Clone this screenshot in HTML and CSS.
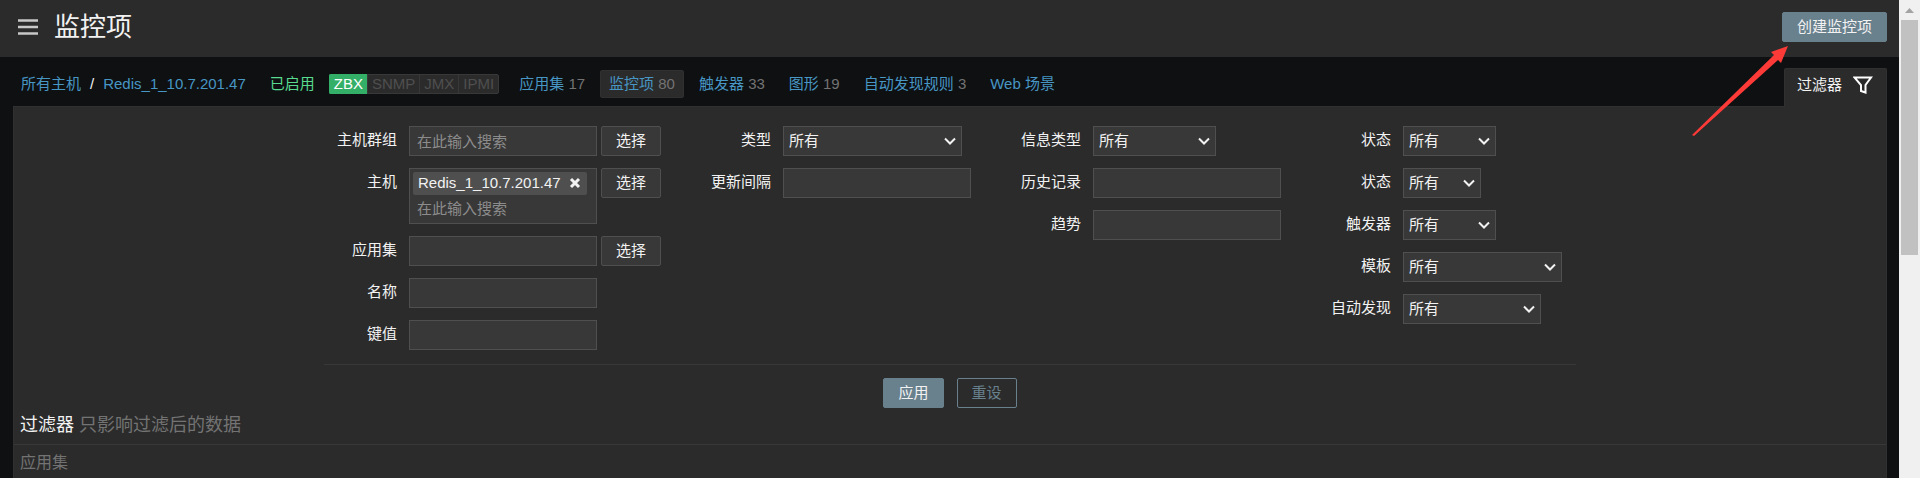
FILE: index.html
```html
<!DOCTYPE html>
<html lang="zh-CN">
  <head>
    <meta charset="UTF-8" />
    <meta name="viewport" content="width=device-width, initial-scale=1.0" />

    <title>监控项</title>

    <link rel="stylesheet" href="styles.css">
  </head>

  <body>
    <main class="page">
      <header class="header">
        <button type="button" class="menu-toggle" aria-label="菜单">
          <svg width="20" height="16" viewBox="0 0 20 16">
            <path d="M0 1.5h20M0 8h20M0 14.5h20" stroke="#c8c8c8" stroke-width="2.6" />
          </svg>
        </button>
        <h1>监控项</h1>
        <button type="button" class="btn primary create">创建监控项</button>
      </header>

      <div class="nav-row">
        <nav class="host-nav">
          <a href="#">所有主机</a>
          <span class="slash">/</span>
          <a href="#">Redis_1_10.7.201.47</a>
          <span class="enabled">已启用</span>
          <div class="badges">
            <span class="on">ZBX</span>
            <span>SNMP</span>
            <span>JMX</span>
            <span>IPMI</span>
          </div>
          <div class="tabs">
            <div class="tab"><a href="#">应用集</a> 17</div>
            <div class="tab selected"><a href="#">监控项</a> 80</div>
            <div class="tab"><a href="#">触发器</a> 33</div>
            <div class="tab"><a href="#">图形</a> 19</div>
            <div class="tab"><a href="#">自动发现规则</a> 3</div>
            <div class="tab"><a href="#">Web 场景</a></div>
          </div>
        </nav>
        <button type="button" class="filter-tab">
          过滤器
          <svg width="20" height="18" viewBox="0 0 20 18">
            <path d="M1.5 1.5h16.5L12.5 9v7.5L8 15V9z" fill="none" stroke="#fff" stroke-width="2" />
          </svg>
        </button>
      </div>

      <section class="panel">
        <form class="filter">
          <div class="columns">
            <div class="column first">
              <div class="field">
                <label for="groups">主机群组</label>
                <input type="text" id="groups" placeholder="在此输入搜索">
                <button type="button" class="btn">选择</button>
              </div>
              <div class="field">
                <label for="hosts">主机</label>
                <div class="multiselect">
                  <span class="token">
                    Redis_1_10.7.201.47
                    <button type="button" aria-label="移除">
                      <svg width="12" height="12" viewBox="0 0 12 12">
                        <path d="M2 2l8 8M10 2l-8 8" stroke="#f2f2f2" stroke-width="3" />
                      </svg>
                    </button>
                  </span>
                  <input type="text" id="hosts" placeholder="在此输入搜索">
                </div>
                <button type="button" class="btn">选择</button>
              </div>
              <div class="field">
                <label for="application">应用集</label>
                <input type="text" id="application">
                <button type="button" class="btn">选择</button>
              </div>
              <div class="field">
                <label for="name">名称</label>
                <input type="text" id="name">
              </div>
              <div class="field">
                <label for="key">键值</label>
                <input type="text" id="key">
              </div>
            </div>

            <div class="column">
              <div class="field">
                <label for="type">类型</label>
                <select id="type" class="w-type"><option>所有</option></select>
              </div>
              <div class="field">
                <label for="delay">更新间隔</label>
                <input type="text" id="delay">
              </div>
            </div>

            <div class="column">
              <div class="field">
                <label for="value-type">信息类型</label>
                <select id="value-type" class="w-value"><option>所有</option></select>
              </div>
              <div class="field">
                <label for="history">历史记录</label>
                <input type="text" id="history">
              </div>
              <div class="field">
                <label for="trends">趋势</label>
                <input type="text" id="trends">
              </div>
            </div>

            <div class="column">
              <div class="field">
                <label for="state">状态</label>
                <select id="state" class="w-state"><option>所有</option></select>
              </div>
              <div class="field">
                <label for="status">状态</label>
                <select id="status" class="w-status"><option>所有</option></select>
              </div>
              <div class="field">
                <label for="triggers">触发器</label>
                <select id="triggers" class="w-state"><option>所有</option></select>
              </div>
              <div class="field">
                <label for="template">模板</label>
                <select id="template" class="w-template"><option>所有</option></select>
              </div>
              <div class="field">
                <label for="discovery">自动发现</label>
                <select id="discovery" class="w-discovery"><option>所有</option></select>
              </div>
            </div>
          </div>

          <div class="actions">
            <button type="button" class="btn primary">应用</button>
            <button type="button" class="btn outline">重设</button>
          </div>
        </form>

        <div class="subfilter">
          <h4>过滤器 <span>只影响过滤后的数据</span></h4>
          <h3>应用集</h3>
        </div>
      </section>

      <svg class="arrow" width="98" height="92" viewBox="0 0 98 92">
        <path d="M97 1L80 7l3 3L1 90l2 1L87 15l3 3z" fill="#fc3a37" />
      </svg>
    </main>

    <div class="scrollbar">
      <svg width="9" height="5" viewBox="0 0 9 5">
        <path d="M0 5L4.5 0L9 5z" fill="#a3a3a3" />
      </svg>
      <div class="thumb"></div>
    </div>
  </body>
</html>
```

FILE: styles.css
```css
*,
*::before,
*::after {
  box-sizing: border-box;
}

body {
  margin: 0;
  height: 100vh;
  display: flex;
  overflow: hidden;
  background-color: #0e1012;
  color: #f2f2f2;
  font-family: "Liberation Sans", "Noto Sans CJK SC", sans-serif;
  font-size: 15px;
  line-height: 20px;
}

button,
input,
select {
  font: inherit;
  color: inherit;
}

button {
  cursor: pointer;
}

a {
  color: #4796c4;
  text-decoration: none;
}

h1,
h3,
h4 {
  margin: 0;
  font-weight: normal;
}

.page {
  position: relative;
  flex: 1;
  min-width: 0;
  display: flex;
  flex-direction: column;
  overflow: hidden;
}

/* header */

.header {
  flex: none;
  display: flex;
  align-items: center;
  height: 57px;
  padding: 0 12px 3px 18px;
  background-color: #2b2b2b;
}

.menu-toggle {
  display: flex;
  margin-right: 16px;
  padding: 0;
  border: 0;
  background: none;
}

h1 {
  font-size: 26px;
  line-height: 32px;
}

.btn {
  flex: none;
  height: 30px;
  min-width: 60px;
  padding: 0 14px;
  border: 1px solid #4f4f4f;
  border-radius: 2px;
  background-color: #383838;
}

.btn.primary {
  border-color: #69808d;
  background-color: #69808d;
}

.btn.outline {
  border-color: #69808d;
  background: none;
  color: #69808d;
}

.create {
  margin-left: auto;
}

/* host navigation */

.nav-row {
  flex: none;
  display: flex;
  justify-content: space-between;
  align-items: flex-end;
  height: 49px;
  padding: 0 12px 0 21px;
}

.host-nav {
  display: flex;
  align-items: center;
  height: 28px;
  margin-bottom: 8px;
  white-space: nowrap;
}

.slash {
  margin: 0 9px;
}

.enabled {
  margin: 0 14px 0 24px;
  color: #59db8f;
}

.badges {
  display: flex;
  height: 20px;
  border: 1px solid #383838;
  border-radius: 2px;
  background-color: #2b2b2b;
  color: #4f4f4f;
  line-height: 18px;
}

.badges span {
  padding: 0 4px;
  border-left: 1px solid #383838;
}

.badges .on {
  margin: -1px 0 -1px -1px;
  border: 1px solid #34af67;
  border-right: 0;
  border-radius: 2px 0 0 2px;
  background-color: #34af67;
  color: #fff;
}

.tabs {
  display: flex;
  gap: 6px;
  margin-left: 11px;
  color: #737373;
}

.tab {
  padding: 3px 8px;
  border: 1px solid transparent;
  border-radius: 2px;
}

.tab.selected {
  border-color: #303030;
  background-color: #2b2b2b;
}

.filter-tab {
  position: relative;
  display: flex;
  align-items: center;
  gap: 11px;
  height: 39px;
  margin-bottom: -1px;
  padding: 0 13px 7px 12px;
  border: 1px solid #303030;
  border-bottom: 0;
  border-radius: 2px 2px 0 0;
  background-color: #2b2b2b;
}

/* filter */

.panel {
  flex: 1 0 auto;
  margin: 0 12px 0 13px;
  border: 1px solid #303030;
  border-bottom: 0;
  background-color: #2b2b2b;
}

.filter {
  max-width: 1252px;
  margin: 0 auto;
  padding-top: 19px;
}

.columns {
  display: flex;
  padding-bottom: 14px;
  border-bottom: 1px solid #383838;
}

.column {
  display: flex;
  flex-direction: column;
  gap: 12px;
  width: 310px;
}

.column.first {
  width: 337px;
}

.field {
  display: flex;
  align-items: flex-start;
}

.field label {
  flex: none;
  width: 122px;
  padding: 4px 12px 0 0;
  text-align: right;
}

.first label {
  width: 85px;
}

.field .btn {
  margin-left: 4px;
}

.field input,
.multiselect {
  width: 188px;
  height: 30px;
  padding: 0 7px;
  border: 1px solid #4f4f4f;
  border-radius: 0;
  background-color: #383838;
}

.multiselect {
  height: 56px;
  padding: 3px;
}

.multiselect input {
  width: 100%;
  height: 26px;
  padding: 0 4px;
  border: 0;
  background: none;
}

::placeholder {
  color: #8c8c8c;
  opacity: 1;
}

.token {
  display: flex;
  align-items: center;
  gap: 8px;
  width: fit-content;
  height: 23px;
  padding: 0 6px 2px 5px;
  border-radius: 2px;
  background-color: #4f4f4f;
}

.token button {
  display: flex;
  padding: 0;
  border: 0;
  background: none;
}

select {
  height: 30px;
  padding: 0 5px;
  border: 1px solid #4f4f4f;
  border-radius: 0;
  appearance: none;
  background: #383838 url("data:image/svg+xml,%3Csvg xmlns='http://www.w3.org/2000/svg' width='12' height='8'%3E%3Cpath d='M1 1.5l5 5 5-5' fill='none' stroke='%23f2f2f2' stroke-width='2'/%3E%3C/svg%3E") no-repeat right 5px center;
}

.w-type {
  width: 179px;
}

.w-value {
  width: 123px;
}

.w-state {
  width: 93px;
}

.w-status {
  width: 78px;
}

.w-template {
  width: 159px;
}

.w-discovery {
  width: 138px;
}

.actions {
  display: flex;
  justify-content: center;
  gap: 13px;
  padding: 13px 0 0;
}

.subfilter h4 {
  padding: 5px 6px 7px;
  border-bottom: 1px solid #383838;
  font-size: 18px;
  line-height: 24px;
}

.subfilter h4 span {
  color: #737373;
}

.subfilter h3 {
  padding: 8px 6px;
  color: #737373;
  font-size: 16px;
}

.arrow {
  position: absolute;
  top: 45px;
  right: 110px;
  pointer-events: none;
}

/* scrollbar */

.scrollbar {
  flex: none;
  display: flex;
  flex-direction: column;
  align-items: center;
  width: 21px;
  padding-top: 8px;
  background-color: #f0f0f0;
}

.thumb {
  width: 17px;
  height: 50%;
  margin-top: 7px;
  background-color: #c1c1c1;
}
```
